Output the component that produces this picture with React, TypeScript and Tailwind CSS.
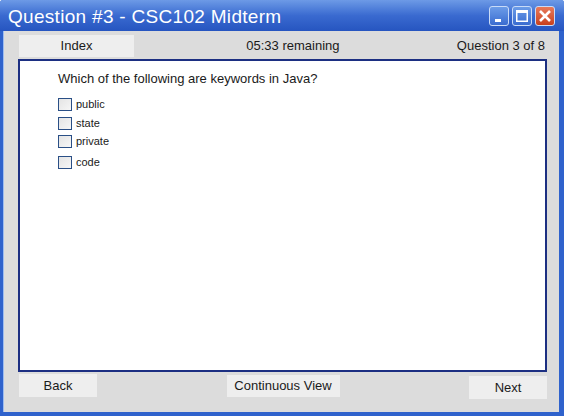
import React from "react";

const font = { fontFamily: '"Liberation Sans", Arial, sans-serif' };

function TitleBtn({ kind }: { kind: "min" | "max" | "close" }) {
  const isClose = kind === "close";
  return (
    <div
      className={
        "w-[20px] h-[20px] rounded-[3px] border border-[#c9dbf7] flex items-center justify-center " +
        (isClose
          ? "bg-gradient-to-b from-[#e8795a] to-[#c8401c]"
          : "bg-gradient-to-b from-[#6c9ce8] to-[#3a6cd0]")
      }
    >
      {kind === "min" && (
        <svg width="14" height="14" viewBox="0 0 14 14">
          <rect x="3" y="10" width="6" height="3" fill="#fff" />
        </svg>
      )}
      {kind === "max" && (
        <svg width="14" height="14" viewBox="0 0 14 14">
          <rect x="1.75" y="1.75" width="10.5" height="10.5" fill="none" stroke="#fff" strokeWidth="1.5" />
          <rect x="1" y="1" width="12" height="3" fill="#fff" />
        </svg>
      )}
      {isClose && (
        <svg width="14" height="14" viewBox="0 0 14 14">
          <path d="M2 2 L12 12 M12 2 L2 12" stroke="#fff" strokeWidth="2.6" />
        </svg>
      )}
    </div>
  );
}

export default function App() {
  const options = [
    { t: "public", m: "" },
    { t: "state", m: "mt-[6px]" },
    { t: "private", m: "mt-[5px]" },
    { t: "code", m: "mt-[8px]" },
  ];
  return (
    <div style={font} className="w-[567px] h-[419px] bg-white">
      <div className="w-[564px] h-[416px] flex flex-col bg-[#2f62cc] rounded-t-[3px]">
        <div className="h-[31px] shrink-0 flex items-center justify-between pl-[8px] pr-[9px] bg-gradient-to-b from-[#6d9ae6] via-[#3a6ad0] to-[#2655c0] rounded-t-[3px]">
          <span className="text-white text-[19px] tracking-[0.3px] leading-none pt-[1px]">Question #3 - CSC102 Midterm</span>
          <div className="flex gap-[3px] pt-[1px]">
            <TitleBtn kind="min" />
            <TitleBtn kind="max" />
            <TitleBtn kind="close" />
          </div>
        </div>
        <div className="flex-1 ml-[3px] mr-[5px] mb-[4px] bg-[#dcdcdc] flex flex-col pl-[14px] pr-[12px] border-l border-[#9dbcf0]">
          <div className="flex items-center pt-[4px] pb-[2px] text-[13px] text-[#1a1a1a]">
            <div className="ml-[1px] w-[115px] h-[22px] bg-[#eeeeee] flex items-center justify-center">Index</div>
            <div className="flex-1 text-center pr-[5px]">05:33 remaining</div>
            <div className="pr-[2px]">Question 3 of 8</div>
          </div>
          <div className="h-[313px] bg-white border-2 border-[#1c2f82] pl-[38px] pt-[10px]">
            <div className="text-[13px] text-[#1a1a1a] leading-[15px]">Which of the following are keywords in Java?</div>
            <div className="flex flex-col mt-[12px]">
              {options.map((o) => (
                <div key={o.t} className={"flex items-center gap-[4px] " + o.m}>
                  <div className="w-[14px] h-[13px] border border-[#2a4f86] bg-gradient-to-br from-[#e4e4e4] to-[#f6f6f6]" />
                  <span className="text-[11px] text-[#1a1a1a] leading-[13px]">{o.t}</span>
                </div>
              ))}
            </div>
          </div>
          <div className="flex justify-between items-start pl-[1px] pt-[2px] text-[13px] text-[#1a1a1a]">
            <div className="w-[78px] h-[23px] bg-[#eeeeee] flex items-center justify-center">Back</div>
            <div className="w-[113px] h-[22px] mt-[1px] bg-[#eeeeee] flex items-center justify-center">Continuous View</div>
            <div className="w-[78px] h-[23px] mt-[2px] bg-[#eeeeee] flex items-center justify-center">Next</div>
          </div>
        </div>
      </div>
    </div>
  );
}
